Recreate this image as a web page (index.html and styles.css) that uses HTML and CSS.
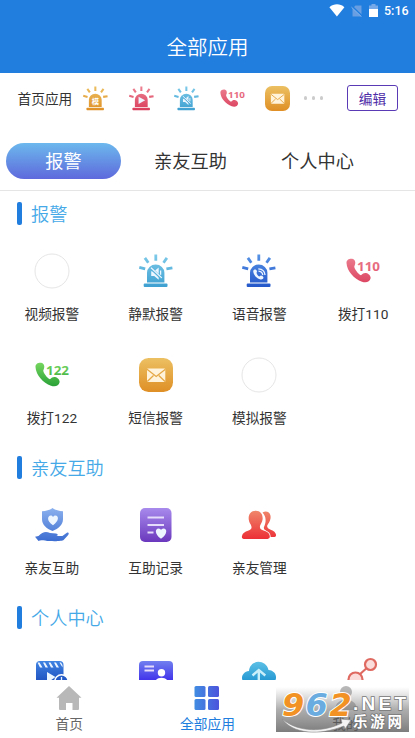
FILE: index.html
```html
<!DOCTYPE html>
<html lang="zh-CN">
<head>
<meta charset="utf-8">
<title>全部应用</title>
<link rel="stylesheet" href="styles.css">
</head>
<body>
<svg class="defs" width="0" height="0" aria-hidden="true">
  <defs>
    <linearGradient id="amber" gradientUnits="userSpaceOnUse" x1="0" y1="0" x2="0" y2="34"><stop offset="0" stop-color="#ecc062"/><stop offset="1" stop-color="#df8f25"/></linearGradient>
    <linearGradient id="rose" gradientUnits="userSpaceOnUse" x1="0" y1="0" x2="0" y2="34"><stop offset="0" stop-color="#ee8494"/><stop offset="1" stop-color="#d93b59"/></linearGradient>
    <linearGradient id="sky" gradientUnits="userSpaceOnUse" x1="0" y1="0" x2="0" y2="34"><stop offset="0" stop-color="#7fcbea"/><stop offset="1" stop-color="#3c9fd0"/></linearGradient>
    <linearGradient id="blue" gradientUnits="userSpaceOnUse" x1="0" y1="0" x2="0" y2="34"><stop offset="0" stop-color="#5794e6"/><stop offset="1" stop-color="#2255c9"/></linearGradient>
    <linearGradient id="green" gradientUnits="userSpaceOnUse" x1="0" y1="4" x2="0" y2="30"><stop offset="0" stop-color="#78d860"/><stop offset="1" stop-color="#249d34"/></linearGradient>
    <linearGradient id="care" gradientUnits="userSpaceOnUse" x1="0" y1="0" x2="0" y2="34"><stop offset="0" stop-color="#8bb1ee"/><stop offset="1" stop-color="#3a6bd0"/></linearGradient>
    <linearGradient id="violet" gradientUnits="userSpaceOnUse" x1="0" y1="0" x2="0" y2="34"><stop offset="0" stop-color="#a88aec"/><stop offset="1" stop-color="#6a38bd"/></linearGradient>
    <linearGradient id="red" gradientUnits="userSpaceOnUse" x1="0" y1="3" x2="0" y2="31"><stop offset="0" stop-color="#ef866a"/><stop offset="1" stop-color="#ec2f36"/></linearGradient>
    <linearGradient id="indigo" gradientUnits="userSpaceOnUse" x1="0" y1="3" x2="0" y2="25"><stop offset="0" stop-color="#7180ef"/><stop offset="1" stop-color="#3a28ea"/></linearGradient>
    <linearGradient id="film" gradientUnits="userSpaceOnUse" x1="0" y1="3" x2="0" y2="25"><stop offset="0" stop-color="#3f83e3"/><stop offset="1" stop-color="#1e4fbd"/></linearGradient>
    <linearGradient id="cloud" gradientUnits="userSpaceOnUse" x1="0" y1="3" x2="0" y2="25"><stop offset="0" stop-color="#5fc2e6"/><stop offset="1" stop-color="#1e93d0"/></linearGradient>
    <linearGradient id="grid" gradientUnits="userSpaceOnUse" x1="0" y1="0" x2="25" y2="0"><stop offset="0" stop-color="#418ee2"/><stop offset="1" stop-color="#4c55dc"/></linearGradient>
    <linearGradient id="shade" x1="0" y1="0" x2="0" y2="1"><stop offset="0" stop-color="#888" stop-opacity="0"/><stop offset=".5" stop-color="#777" stop-opacity=".6"/><stop offset="1" stop-color="#666" stop-opacity=".85"/></linearGradient>
  </defs>
  <symbol id="siren" viewBox="0 0 34 34">
    <rect x="4.7" y="29.6" width="23.8" height="3.4" rx="1"/>
    <path d="M8 28.6V18.7a8.7 8.2 0 0 1 17.4 0v9.9z"/>
    <g class="rays"><path d="M16.8 .6v6.200M5.900 3.900l3.400 4.800M27.900 3.900l-3.400 4.800M.3 13.300l5.900 1.500M33.400 13.800l-6 1"/></g>
  </symbol>
  <symbol id="mute" viewBox="0 0 34 34">
    <path class="light" d="M12.2 17.2h3l4.5-3.7v12.2l-4.5-3.8h-3z"/>
    <path class="cut" d="M12.2 14.5l10.5 10"/><path class="line" d="M12 13.7l10.8 10.2"/>
    <path class="line" d="M21.6 16.5v4.3"/>
  </symbol>
  <symbol id="handset" viewBox="0 0 34 34"><path d="M.5 9C.4 5.500 4 4.200 7 5c2.600 1 3 4.500 1.300 7.200C8.200 15 12.300 20 15 21.300c2-1.700 2.800-2.500 5-2.200 3 .6 5 3.300 4.600 5.200-.7 3.600-4.600 4.900-8.600 3.400C8 24.800 1 17.200.5 9z"/></symbol>
  <symbol id="mail" viewBox="0 0 34 34">
    <rect width="34" height="34" rx="9.5"/>
    <rect class="light" x="8" y="10.5" width="18.3" height="13.5" rx=".8"/>
    <path class="flap" d="M8 11.2l9.2 7.3 9.2-7.3M8.3 23.5l6.2-6M26 23.5l-6.2-6"/>
  </symbol>
</svg>

<div class="screen">
  <header class="header">
    <div class="status">
      <svg width="16" height="13" viewBox="0 0 16 13"><path d="M.4 3.200C5-.6 11-.6 15.400 3.200L7.900 12.600z" fill="#fff"/></svg>
      <svg class="sim" width="12" height="12" viewBox="0 0 12 12"><path d="M4.500.5h6v11h-9v-8z" fill="#699fe2"/><path d="M.5 1l11 10.500" stroke="#217dde" stroke-width="1.800"/><path d="M.5 2.200l10 9.500" stroke="#8ab7ed" stroke-width="1"/></svg>
      <svg class="battery" width="9" height="13" viewBox="0 0 9 13"><path d="M2.500 0h4v1.500H9V5H0V1.500h2.500z" fill="#75a9e8"/><path d="M0 5h9v8H0z" fill="#fff"/></svg>
      <span class="clock">5:16</span>
    </div>
    <h1 class="title">全部应用</h1>
  </header>

  <section class="pinned">
    <span class="pinned-name">首页应用</span>
    <div class="pinned-icons">
      <svg class="amber" viewBox="0 0 34 34"><use href="#siren"/><text class="glyph" x="16.800" y="25" text-anchor="middle">模</text></svg>
      <svg class="rose" viewBox="0 0 34 34"><use href="#siren"/><path class="light" d="M13 14.500l9 5-9 5z"/></svg>
      <svg class="sky" viewBox="0 0 34 34"><use href="#siren"/><use href="#mute"/></svg>
      <svg class="rose" viewBox="0 0 34 34"><use href="#handset"/><text class="num" x="11" y="16.500" textLength="23" lengthAdjust="spacingAndGlyphs">110</text></svg>
      <svg class="amber" viewBox="0 0 34 34"><use href="#mail"/></svg>
    </div>
    <div class="dots"><i></i><i></i><i></i></div>
    <button class="edit">编辑</button>
  </section>

  <nav class="tabs">
    <span class="tab active">报警</span>
    <span class="tab">亲友互助</span>
    <span class="tab">个人中心</span>
  </nav>

  <main class="content">
    <section>
      <h2 class="heading">报警</h2>
      <div class="apps">
        <div class="app"><svg viewBox="0 0 34 34"><circle class="blank" cx="17" cy="17" r="17"/></svg><span>视频报警</span></div>
        <div class="app"><svg class="sky" viewBox="0 0 34 34"><use href="#siren"/><use href="#mute"/></svg><span>静默报警</span></div>
        <div class="app"><svg class="blue" viewBox="0 0 34 34"><use href="#siren"/><use class="light" href="#handset" x="11" y="13.500" width="14.500" height="14.500"/><path class="line" d="M16.500 17.200c2.500.2 4 1.700 4.300 4M16.300 14.800c4 .2 6.500 2.500 6.700 6.200"/></svg><span>语音报警</span></div>
        <div class="app"><svg class="rose" viewBox="0 0 34 34"><use href="#handset"/><text class="num" x="11" y="16.500" textLength="23" lengthAdjust="spacingAndGlyphs">110</text></svg><span>拨打110</span></div>
        <div class="app"><svg class="green" viewBox="0 0 34 34"><use href="#handset"/><text class="num" x="11" y="16.500" textLength="23" lengthAdjust="spacingAndGlyphs">122</text></svg><span>拨打122</span></div>
        <div class="app"><svg class="amber" viewBox="0 0 34 34"><use href="#mail"/></svg><span>短信报警</span></div>
        <div class="app"><svg viewBox="0 0 34 34"><circle class="blank" cx="17" cy="17" r="17"/></svg><span>模拟报警</span></div>
      </div>
    </section>
    <section>
      <h2 class="heading">亲友互助</h2>
      <div class="apps">
        <div class="app"><svg class="care" viewBox="0 0 34 34"><path d="M17.500 0c3 2.200 6.500 3 10.500 3.300V11c0 6-4.500 9.600-10.500 12C11.500 20.600 7 17 7 11V3.300C11 3 14.500 2.200 17.500 0z"/><path d="M0 28.800l3.500-.8c4-4.300 7.500-5 11.500-3l6 .5c2 .2 2.400 2.200.4 2.500h6l4.800-3.400c1.800-.3 2 1.200.8 2.600l-4.200 4.600c-1.500 1.500-8 1.500-14.300 1.300C9.500 32.800 6 31.400 3.500 33z"/><path class="light" d="M18 17.200c-7-4.500-5.300-9.800-2.300-9.800 1.300 0 2 .7 2.300 1.600.4-.9 1.300-1.600 2.500-1.600 3.300 0 4 5.300-2.500 9.800z"/></svg><span>亲友互助</span></div>
        <div class="app"><svg class="violet" viewBox="0 0 34 34"><rect x="1" width="31.500" height="34" rx="5"/><path class="rule" d="M8.500 9.500h16.500M8.500 17H25M8.500 24.500h6"/><path class="light" d="M22 30.800c-7-5-5.800-10.300-2.500-10.300 1.400 0 2.200.8 2.500 1.600.4-.8 1.200-1.600 2.600-1.600 3.600 0 4.300 5.500-2.600 10.300z"/></svg><span>互助记录</span></div>
        <div class="app"><svg class="red" viewBox="0 0 34 34"><path d="M20.500 4.500c5-3 9 1 8 6-.4 3-2 4.500-3.200 6.800-.8 3 2 3.600 5.200 5.200 3 1.500 4.200 4.500 3.300 5.800-1 1-3 .8-5.500.8-1.400-6-6.500-6.200-6.500-9.700 2.500-5 2.800-10.500-1.300-14.900z"/><path class="person" d="M13.700 2.700c5 0 7.300 3.800 6.900 8.500-.3 3-2 4.800-2.600 6.800-.6 3 1.500 3.700 5 5 4 1.700 5.500 4 4.500 7-1 1-2.500 1-5 1H3c-2.500 0-3.500-.8-3-3 .5-3 3-4.200 6-5.300 3.300-1.200 4-2.200 3.300-4.700-.5-2-2.300-3.500-2.600-6.800-.4-4.700 2-8.500 7-8.500z"/></svg><span>亲友管理</span></div>
      </div>
    </section>
    <section>
      <h2 class="heading">个人中心</h2>
      <div class="apps">
        <div class="app"><svg class="film" viewBox="0 0 34 34"><rect x="1" y="3" width="27.500" height="27" rx="4"/><path class="light" d="M2.500 4.500h2l3 5h-2.500zM8 4.500h2l3 5h-2.500zM13.500 4.500h2l3 5H16zM19 4.500h2l3 5h-2.500zM24.500 4.500h1.500l1.500 2.500v2.500zM12 14l8.500 5-8.500 6z"/><circle class="badge" cx="26.500" cy="23.500" r="6.700"/><path class="line" d="M26.500 19v9"/></svg></div>
        <div class="app"><svg class="indigo" viewBox="0 0 34 34"><rect y="3" width="34" height="29" rx="4"/><path class="rule" d="M5.500 8.500h9.500M5.500 12.500h9.500"/><circle class="white" cx="22.500" cy="14.800" r="3.700"/><path class="white" d="M15.500 25c1-7 13-7 14 0z"/></svg></div>
        <div class="app"><svg class="cloud" viewBox="0 0 34 34"><path d="M8 26C-3 26-2 14 7 13 8 1 24 1 26.500 12 37 13 36 26 27 26z"/><path class="arrow" d="M16.800 24V12.500M10.500 17.500l6.300-5.500 6.500 5.500"/></svg></div>
        <div class="app"><svg class="share" viewBox="0 0 34 34"><path d="M13 17l10-9"/><circle cx="24.500" cy="6.500" r="5.500"/><circle cx="9.500" cy="21.500" r="7"/></svg></div>
      </div>
    </section>
  </main>

  <footer class="bottom">
    <div class="item"><svg width="26" height="26" viewBox="0 0 26 26"><path d="M13 1l12.500 11.800H23V24a1 1 0 0 1-1 1h-5.500v-7h-6.500v7H4a1 1 0 0 1-1-1V12.800H.5z" fill="#b8b8b8"/></svg><span>首页</span></div>
    <div class="item current"><svg width="26" height="26" viewBox="0 0 26 26" fill="url(#grid)"><rect x=".5" y="1" width="11" height="11" rx="1.500"/><rect x="14" y="1" width="11" height="11" rx="1.500"/><rect x=".5" y="14" width="11" height="11" rx="1.500"/><rect x="14" y="14" width="11" height="11" rx="1.500"/></svg><span>全部应用</span></div>
    <div class="item"><svg width="26" height="26" viewBox="0 0 26 26" fill="#b8b8b8"><circle cx="13" cy="7" r="6"/><path d="M2 25c0-14 22-14 22 0z"/></svg><span>我的</span></div>
  </footer>

  <svg class="watermark" width="133" height="49" viewBox="0 0 133 49">
    <rect y="4" width="133" height="45" fill="url(#shade)"/>
    <path d="M6 36c17 14 42 13 60 4l-1-4 10 1-6 9-1-3C43 53 17 51 6 36z" fill="#f3f3f3" stroke="#888" stroke-width=".6"/>
    <g class="brand"><text x="6" y="32.500" fill="#f29224">9</text><text x="29.500" y="32.500" fill="#6aace0">6</text><text x="53.500" y="32.500" fill="#f29224">2</text></g>
    <text class="net" x="77" y="27" textLength="53" lengthAdjust="spacing">.NET</text>
    <text class="site" x="77" y="43.500" textLength="49">乐游网</text>
  </svg>
</div>
</body>
</html>
```
FILE: styles.css
```css
* { box-sizing: border-box; }
body { margin: 0; font-family: Roboto, "Noto Sans CJK SC", sans-serif; color: #333; background: #fff; }
.defs { position: absolute; }
.screen { position: relative; width: 415px; height: 738px; display: flex; flex-direction: column; overflow: hidden; }

.header { height: 73px; flex: none; background: #217dde; color: #fff; }
.status { height: 21px; display: flex; align-items: center; justify-content: flex-end; padding-right: 6px; }
.sim { margin-left: 6px; }
.battery { margin-left: 6px; }
.clock { margin-left: 6px; font-size: 12.500px; font-weight: 500; line-height: 22px; width: 25px; }
.title { margin: 0; height: 50px; line-height: 50px; text-align: center; font-size: 20.500px; font-weight: 350; font-family: "Noto Sans CJK SC", sans-serif; }

.pinned { height: 50px; flex: none; display: flex; align-items: center; padding: 0 17px 0 17.500px; }
.pinned-name { font-size: 13.700px; width: 65.500px; white-space: nowrap; }
.pinned-icons { display: flex; gap: 20.500px; }
.pinned-icons svg { width: 25px; height: 25px; display: block; overflow: visible; }
.dots { display: flex; gap: 4.500px; margin-left: 13.500px; }
.dots i { width: 3.500px; height: 3.500px; border-radius: 50%; background: #ccc; }
.edit { margin-left: auto; width: 51px; height: 26px; padding: 0; border: 1px solid #5a3bb5; border-radius: 3px; background: #fff; color: #4e2da8; font: 13.700px/23px "Noto Sans CJK SC", sans-serif; }

.tabs { height: 68px; flex: none; display: flex; align-items: center; padding: 9px 0 0 6px; border-bottom: 1px solid #e5e5e5; font-size: 18.200px; }
.tab { width: 115px; height: 36px; line-height: 37px; text-align: center; margin-right: 12px; }
.tab.active { border-radius: 18px; background: linear-gradient(#6cb8ed, #5e69dc); color: #fff; }

.content { flex: 1; min-height: 0; overflow: hidden; }
.heading { margin: 0; height: 46px; display: flex; align-items: center; padding: 0 0 2px 16.500px; color: #45a9e8; font-size: 18.200px; font-weight: 350; }
.heading::before { content: ""; width: 5px; height: 23px; border-radius: 2px; background: #217dde; margin-right: 9.500px; }
.apps { display: grid; grid-template-columns: repeat(4, 1fr); }
.app { height: 104px; padding-top: 17px; display: flex; flex-direction: column; align-items: center; font-size: 13.700px; line-height: 20px; }
.app svg { width: 34px; height: 34px; flex: none; overflow: visible; margin-bottom: 16px; }

.amber { fill: url(#amber); stroke: url(#amber); stroke-width: 0; }
.rose { fill: url(#rose); stroke: url(#rose); stroke-width: 0; }
.sky { fill: url(#sky); stroke: url(#sky); stroke-width: 0; }
.blue { fill: url(#blue); stroke: url(#blue); stroke-width: 0; }
.green { fill: url(#green); }
.care { fill: url(#care); }
.violet { fill: url(#violet); }
.red { fill: url(#red); }
.film { fill: url(#film); }
.indigo { fill: url(#indigo); }
.cloud { fill: url(#cloud); }
.rays { stroke-width: 2.800px; stroke-linecap: butt; fill: none; }
.light { fill: #edf5ff; stroke: none; }
.white { fill: #fff; }
.line { fill: none; stroke: #edf5ff; stroke-width: 1.300px; }
.cut { fill: none; stroke: #56b1da; stroke-width: 2.500px; }
.flap { fill: none; stroke: #e5a846; stroke-width: 1.300px; }
.rule { fill: none; stroke: #e4dcfa; stroke-width: 2px; }
.blank { fill: #fff; stroke: #dedede; stroke-width: .8px; }
.person { stroke: #fff; stroke-width: 1.500px; paint-order: stroke; }
.badge { stroke: #fff; stroke-width: 1.500px; }
.arrow { fill: none; stroke: #c9effb; stroke-width: 2.400px; }
.share { fill: #fbdedb; stroke: #df6a62; stroke-width: 2.200px; }
.num { font: bold 13px "Open Sans", sans-serif; }
.glyph { font: bold 10px "Noto Sans CJK SC", sans-serif; fill: #fff; }
#mail .light { fill: #fff3dc; }

.bottom { height: 58px; flex: none; display: flex; background: #fff; }
.item { flex: 1; display: flex; flex-direction: column; align-items: center; padding-top: 5px; font-size: 13.700px; line-height: 20px; color: #666; }
.item span { margin-top: 3px; }
.item.current { color: #217dde; }
.item:last-child { color: #222; }
.watermark { position: absolute; left: 276px; top: 683px; overflow: visible; }
.brand { font: italic bold 32px "DejaVu Sans", sans-serif; stroke-width: 2px; stroke: #fff; paint-order: stroke; }
.net { font: bold 19px "Liberation Sans", sans-serif; fill: #fff; stroke: #777; stroke-width: 1.500px; paint-order: stroke; }
.site { font: bold 14.500px "Noto Sans CJK SC", sans-serif; fill: #fff; stroke: #777; stroke-width: 1.500px; paint-order: stroke; }
```
